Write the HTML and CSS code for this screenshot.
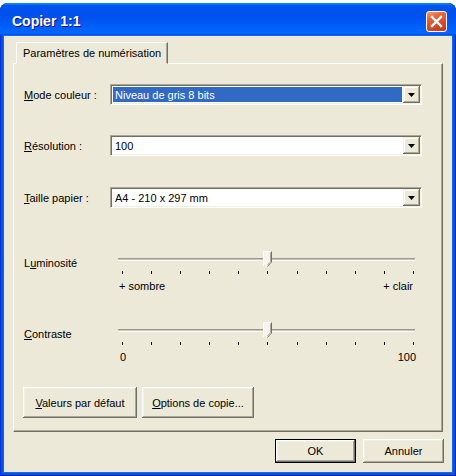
FILE: index.html
```html
<!DOCTYPE html>
<html lang="fr">
<head>
  <meta charset="UTF-8">
  <title>Copier 1:1</title>
  <link rel="stylesheet" href="styles.css">
</head>
<body>
  <div class="window">
    <div class="titlebar">
      <span class="title">Copier 1:1</span>
      <button class="close" aria-label="Fermer">
        <svg width="19" height="19" viewBox="0 0 19 19"><path d="M5 5 L14 14 M14 5 L5 14" stroke="#fff" stroke-width="2.4" stroke-linecap="square"/></svg>
      </button>
    </div>

    <div class="client">
      <div class="tabs">
        <div class="tab">Paramètres de numérisation</div>
      </div>

      <div class="panel">
        <div class="field">
          <label class="label"><u>M</u>ode couleur :</label>
          <div class="combo"><span class="value selected">Niveau de gris 8 bits</span><span class="drop"></span></div>
        </div>
        <div class="field">
          <label class="label"><u>R</u>ésolution :</label>
          <div class="combo"><span class="value">100</span><span class="drop"></span></div>
        </div>
        <div class="field paper">
          <label class="label"><u>T</u>aille papier :</label>
          <div class="combo"><span class="value">A4 - 210 x 297 mm</span><span class="drop"></span></div>
        </div>

        <div class="slider-field first">
          <span class="label">L<u>u</u>minosité</span>
          <div class="slider-wrap">
            <div class="slider">
              <div class="track"></div>
              <div class="ticks"><i></i><i></i><i></i><i></i><i></i><i></i><i></i><i></i><i></i><i></i><i></i></div>
              <svg class="thumb" width="9" height="16" viewBox="0 0 9 16"><path d="M0.5 15 V0.5 H8.5 V11 L4.5 15.5 L0.5 11 Z" fill="#f4f3ee" stroke="#fff"/><path d="M8.5 0.5 V11 L4.5 15.5" fill="none" stroke="#716f64"/><path d="M7.5 1.5 V10.6 L4.5 14" fill="none" stroke="#aca899"/></svg>
            </div>
            <div class="scale"><span>+ sombre</span><span>+ clair</span></div>
          </div>
        </div>

        <div class="slider-field second">
          <span class="label"><u>C</u>ontraste</span>
          <div class="slider-wrap">
            <div class="slider">
              <div class="track"></div>
              <div class="ticks"><i></i><i></i><i></i><i></i><i></i><i></i><i></i><i></i><i></i><i></i><i></i></div>
              <svg class="thumb" width="9" height="16" viewBox="0 0 9 16"><path d="M0.5 15 V0.5 H8.5 V11 L4.5 15.5 L0.5 11 Z" fill="#f4f3ee" stroke="#fff"/><path d="M8.5 0.5 V11 L4.5 15.5" fill="none" stroke="#716f64"/><path d="M7.5 1.5 V10.6 L4.5 14" fill="none" stroke="#aca899"/></svg>
            </div>
            <div class="scale wide"><span>0</span><span>100</span></div>
          </div>
        </div>

        <div class="panel-buttons">
          <button class="btn tall defaults"><u>V</u>aleurs par défaut</button>
          <button class="btn tall options"><u>O</u>ptions de copie...</button>
        </div>
      </div>

      <div class="footer">
        <button class="btn default">OK</button>
        <button class="btn">Annuler</button>
      </div>
    </div>
  </div>
</body>
</html>
```

FILE: styles.css
```css
body {
  margin: 0;
  background: #fff;
  font-family: "Liberation Sans", Arial, sans-serif;
  font-size: 11px;
  color: #000;
}
.window {
  margin-top: 3px;
  height: 473px;
  display: flex;
  flex-direction: column;
  background: #0054e3;
  border-radius: 8px 8px 0 0;
  overflow: hidden;
  box-shadow: inset 1px 0 #0831d9, inset -1px 0 #001ea0, inset 0 -1px #001ea0;
}
.titlebar {
  height: 33px;
  flex: none;
  display: flex;
  align-items: center;
  padding: 0 9px 0 12px;
  background: linear-gradient(180deg, #0997ff, #0053ee 8%, #0050ee 40%, #0066ff 88%, #0066ff 93%, #005bff 95%, #003dd7 96%, #003dd7);
}
.title {
  flex: 1;
  padding-top: 3px;
  color: #fff;
  font-weight: bold;
  font-size: 14px;
  text-shadow: 1px 1px #0f1089;
}
.close {
  width: 21px;
  height: 21px;
  padding: 0;
  margin-top: 3px;
  border: 1px solid #fff;
  border-radius: 3px;
  background: linear-gradient(160deg, #f29d7d 0%, #e5673f 28%, #d84a2a 62%, #c2381a 100%);
  display: flex;
  align-items: center;
  justify-content: center;
}
.client {
  flex: 1;
  margin: 0 4px 4px;
  padding: 6px 9px 0;
  background: #ece9d8;
  display: flex;
  flex-direction: column;
  box-shadow: 0 0 0 1px #166aee;
}
.tabs {
  display: flex;
  padding-left: 3px;
  position: relative;
  z-index: 1;
}
.tab {
  height: 22px;
  box-sizing: border-box;
  padding: 0 6px 1px;
  display: flex;
  align-items: center;
  margin-bottom: -1px;
  background: #ece9d8;
  border: 1px solid;
  border-color: #fff #716f64 transparent #fff;
  box-shadow: inset -1px 0 #aca899;
}
.panel {
  height: 369px;
  box-sizing: border-box;
  padding: 20px 20px 0 10px;
  border: 1px solid;
  border-color: #fff #716f64 #716f64 #fff;
  box-shadow: inset -1px -1px #aca899;
}
.field {
  display: flex;
  align-items: center;
  height: 21px;
}
.field + .field {
  margin-top: 30px;
}
.field.paper {
  margin-top: 31px;
}
.label {
  width: 86px;
  flex: none;
}
.combo {
  flex: 1;
  height: 21px;
  box-sizing: border-box;
  padding: 1px;
  display: flex;
  background: #fff;
  border: 1px solid;
  border-color: #aca899 #fff #fff #aca899;
  box-shadow: inset 1px 1px #716f64, inset -1px -1px #f1efe2;
}
.value {
  flex: 1;
  margin: 1px;
  padding-left: 2px;
  display: flex;
  align-items: center;
}
.value.selected {
  background: #316ac5;
  color: #fff;
}
.drop {
  width: 17px;
  flex: none;
  display: flex;
  align-items: center;
  justify-content: center;
  background: #ece9d8;
  box-shadow: inset -1px -1px #716f64, inset 1px 1px #f1efe2, inset -2px -2px #aca899, inset 2px 2px #fff;
}
.drop::after {
  content: "";
  width: 7px;
  height: 4px;
  margin-top: 1px;
  background: #000;
  clip-path: polygon(0 0, 100% 0, 50% 100%);
}
.slider-field {
  display: flex;
}
.slider-field.first {
  margin-top: 42px;
}
.slider-field.second {
  margin-top: 28px;
}
.slider-field .label {
  width: 94px;
  padding-top: 7px;
  line-height: 13px;
}
.slider-wrap {
  width: 297px;
}
.slider {
  position: relative;
  height: 24px;
  box-sizing: border-box;
  padding-top: 8px;
}
.track {
  height: 3px;
  box-sizing: border-box;
  background: #c9c6b6;
  border-top: 1px solid #9d9a8b;
  border-bottom: 1px solid #fff;
}
.ticks {
  display: flex;
  justify-content: space-between;
  margin: 10px 1px 0 4px;
}
.ticks i {
  width: 1px;
  height: 3px;
  background: #000;
}
.thumb {
  position: absolute;
  left: 145px;
  top: 1px;
}
.scale {
  display: flex;
  justify-content: space-between;
  margin-top: 6px;
  padding: 0 2px 0 1px;
  line-height: 13px;
}
.scale.wide {
  margin-right: -3px;
  padding-left: 2px;
}
.panel-buttons {
  display: flex;
  gap: 5px;
  margin: 23px 0 0 -1px;
}
.btn {
  font: inherit;
  color: #000;
  background: #ece9d8;
  border: none;
  padding: 0;
  width: 81px;
  height: 24px;
  box-sizing: border-box;
  box-shadow: inset -1px -1px #716f64, inset 1px 1px #fff, inset -2px -2px #aca899, inset 2px 2px #f1efe2;
}
.btn.tall {
  height: 31px;
}
.btn.defaults {
  width: 114px;
}
.btn.options {
  width: 112px;
}
.btn.default {
  border: 1px solid #000;
}
.footer {
  display: flex;
  justify-content: flex-end;
  gap: 7px;
  margin: 7px -1px 0 0;
}
```
